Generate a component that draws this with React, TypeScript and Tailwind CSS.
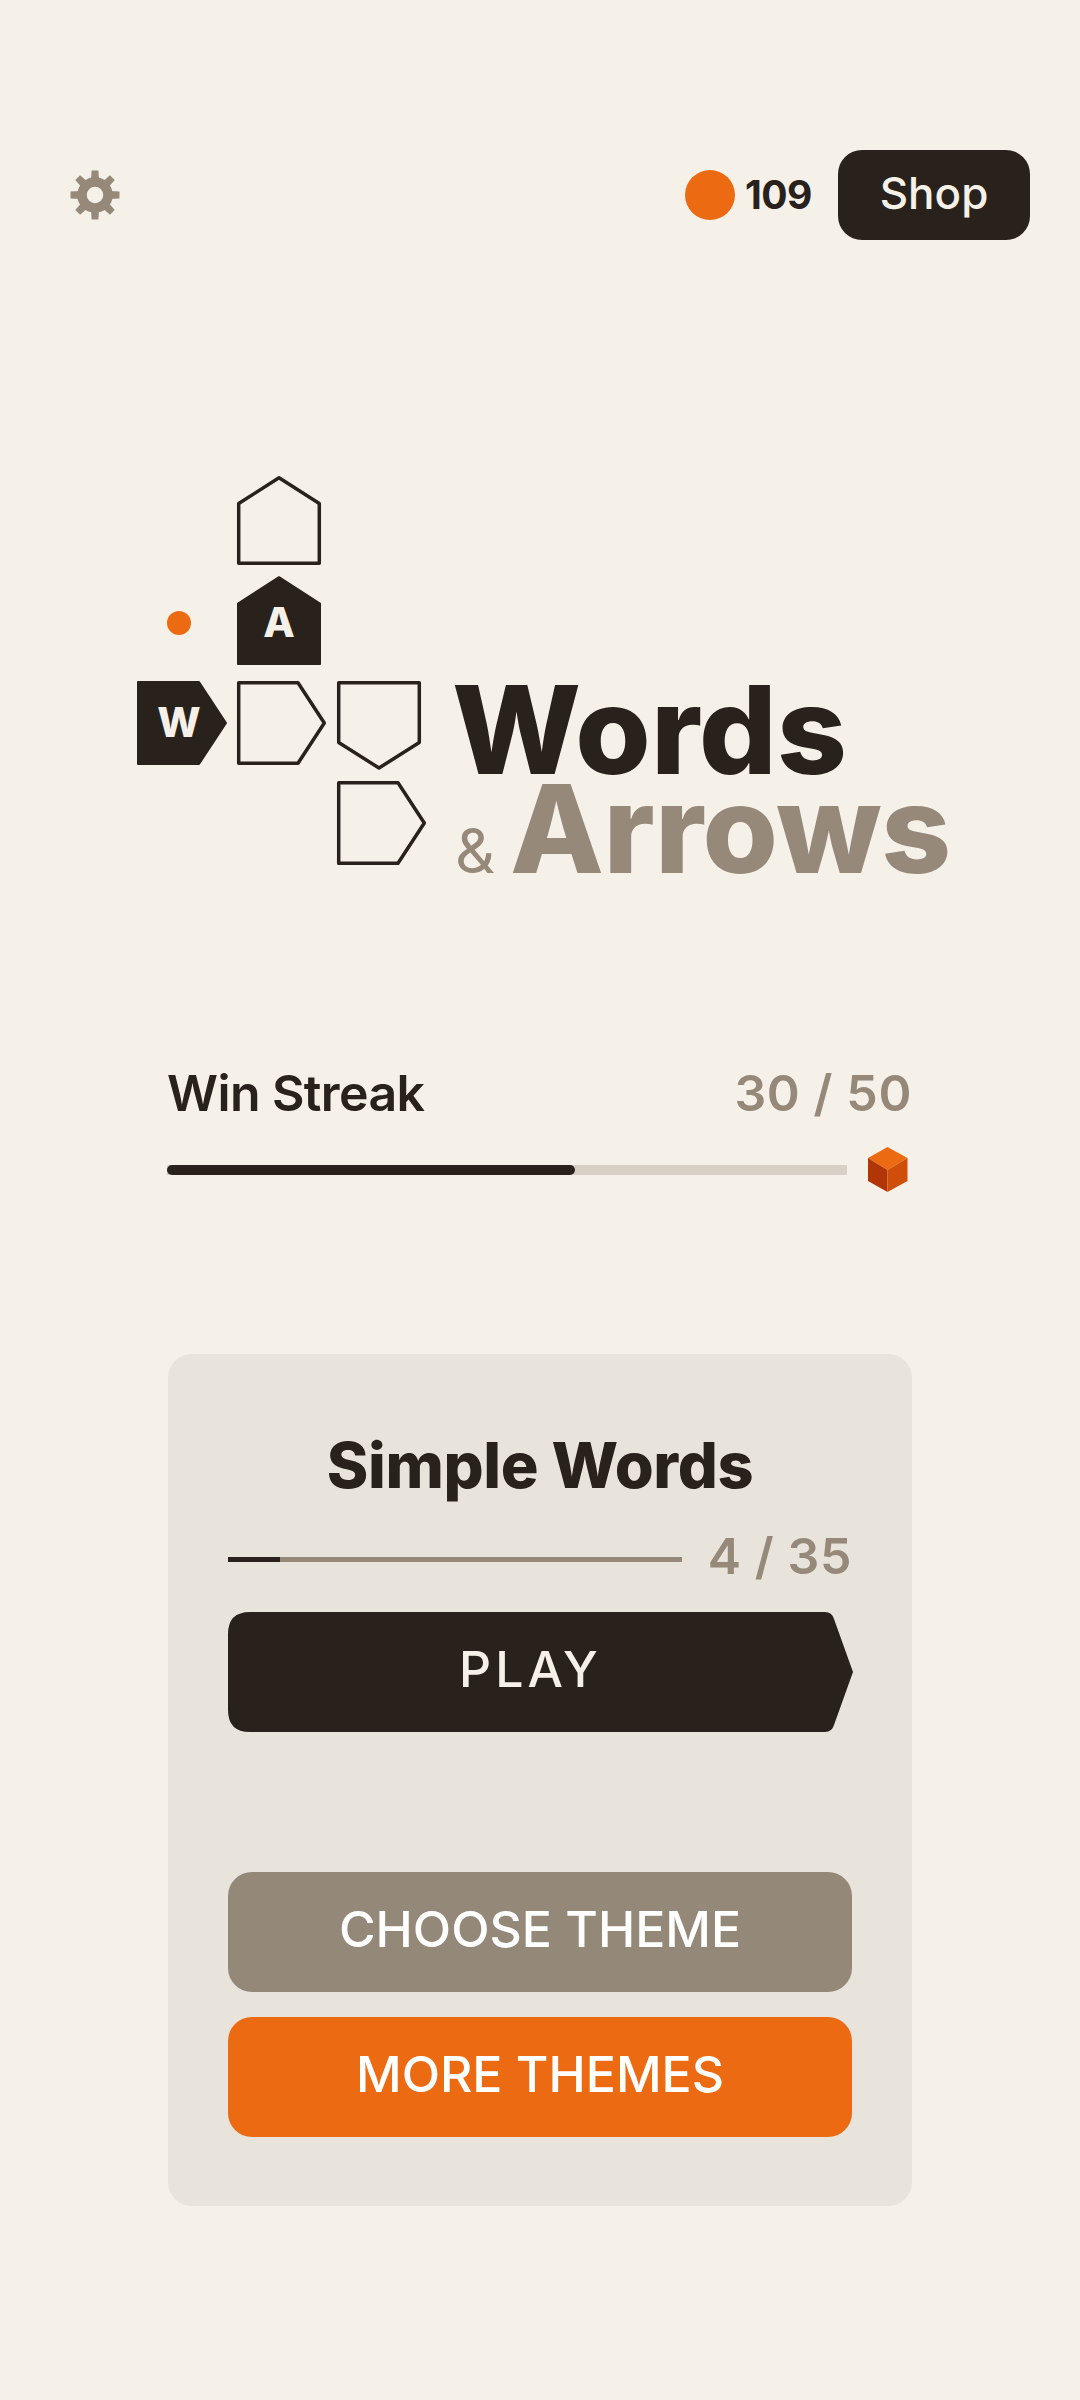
const DARK = "#29221c";

function Gear() {
  const teeth = [0, 45, 90, 135, 180, 225, 270, 315];
  return (
    <svg width="50" height="50" viewBox="0 0 50 50" fill="#96897a">
      <circle cx="25" cy="25" r="13" fill="none" stroke="#96897a" strokeWidth="9.5" />
      {teeth.map((a) => (
        <path key={a} d="M21 10 L21.6 0.5 L28.4 0.5 L29 10 Z" transform={`rotate(${a} 25 25)`} />
      ))}
    </svg>
  );
}

function Logo() {
  const outline = { fill: "none", stroke: DARK, strokeWidth: 3.5, strokeLinejoin: "round" as const };
  const solid = { fill: DARK, stroke: DARK, strokeWidth: 2, strokeLinejoin: "round" as const };
  const letter = { fill: "#f5f1e9", fontSize: 41, fontWeight: 800, textAnchor: "middle" as const, fontFamily: "Inter, sans-serif" };
  return (
    <svg width="289" height="389" viewBox="137 476 289 389" className="shrink-0">
      <path d="M238.7 503.5 L279 477.8 L319.3 503.5 V563.3 H238.7 Z" {...outline} />
      <path d="M238 603.5 L279 577.2 L320 603.5 V664 H238 Z" {...solid} />
      <text x="279" y="637" {...letter}>A</text>
      <circle cx="179" cy="623" r="12" fill="#ec6b12" />
      <path d="M138 682 H199 L226 723 L199 764 H138 Z" {...solid} />
      <text x="179" y="737" {...letter}>W</text>
      <path d="M238.7 682.7 H298 L324.3 723 L298 763.3 H238.7 Z" {...outline} />
      <path d="M338.7 682.7 H419.3 V742.5 L379 768 L338.7 742.5 Z" {...outline} />
      <path d="M338.7 782.7 H398 L424.3 823 L398 863.3 H338.7 Z" {...outline} />
    </svg>
  );
}

function Cube() {
  return (
    <svg width="40" height="45" viewBox="868 1147 40 45" className="shrink-0">
      <path d="M887.5 1147 L907.5 1158 L887.5 1170 L868 1158 Z" fill="#ec6b12" />
      <path d="M868 1158 L887.5 1170 V1192 L868 1181 Z" fill="#b23508" />
      <path d="M907.5 1158 L887.5 1170 V1192 L907.5 1181 Z" fill="#cf4f0a" />
    </svg>
  );
}

export default function App() {
  return (
    <div className="min-h-[2400px] bg-[#f5f1e9] font-['Inter',sans-serif] text-[#29221c]">
      {/* Top bar */}
      <div className="flex items-center justify-between pt-[150px] pl-[70px] pr-[50px]">
        <Gear />
        <div className="flex items-center">
          <div className="h-[50px] w-[50px] rounded-full bg-[#ec6b12]" />
          <span className="ml-[10px] w-[93px] text-[39px] font-bold tracking-[-0.5px]">109</span>
          <button className="flex h-[90px] w-[192px] items-center justify-center rounded-[24px] bg-[#29221c] pb-[4px] text-[44px] font-medium text-[#f5f1e9]">
            Shop
          </button>
        </div>
      </div>

      {/* Logo */}
      <div className="mt-[236px] flex pl-[137px]">
        <Logo />
        <div className="ml-[26px] pt-[204px]">
          <div className="text-[122px] font-extrabold leading-[99px] tracking-[0.2px]">Words</div>
          <div className="flex items-baseline text-[#96897a]">
            <span className="ml-[3px] text-[62px] font-normal leading-[99px]">&amp;</span>
            <span className="ml-[15px] text-[122px] font-extrabold leading-[99px] tracking-[-0.3px]">Arrows</span>
          </div>
        </div>
      </div>

      {/* Win streak */}
      <div className="ml-[167px] mt-[163px] w-[745px]">
        <div className="flex items-center justify-between text-[50px] font-semibold leading-[60px]">
          <span className="tracking-[-0.6px]">Win Streak</span>
          <span className="tracking-[0.6px] text-[#96897a]">30 / 50</span>
        </div>
        <div className="mt-[24px] flex items-center">
          <div className="h-[10px] w-[680px] bg-[#d7d0c5]">
            <div className="h-full w-[408px] rounded-full bg-[#29221c]" />
          </div>
          <div className="ml-[21px]">
            <Cube />
          </div>
        </div>
      </div>

      {/* Card */}
      <div className="ml-[168px] mt-[162px] w-[744px] rounded-[24px] bg-[#e8e4dc] px-[60px] pt-[75px] pb-[69px]">
        <div className="text-center text-[63px] font-extrabold leading-[72px] tracking-[-0.4px]">Simple Words</div>
        <div className="mt-[25px] flex items-center justify-between">
          <div className="mt-[7px] h-[5px] w-[454px] bg-[#96897a]">
            <div className="h-full w-[52px] bg-[#29221c]" />
          </div>
          <span className="text-[50px] font-semibold leading-[60px] tracking-[0.6px] text-[#96897a]">4 / 35</span>
        </div>
        <button className="mt-[26px] block h-[120px] w-[625px] bg-[#29221c] pr-[20px] pb-[5px] text-center text-[50px] font-medium tracking-[4px] text-[#f5f1e9] [clip-path:path('M22,0L597,0Q604,0,606,7L625,60L606,113Q604,120,597,120L22,120Q0,120,0,98L0,22Q0,0,22,0Z')]">
          PLAY
        </button>
        <button className="mt-[140px] block h-[120px] w-full rounded-[24px] bg-[#948879] pb-[6px] text-center text-[50px] font-medium text-white">
          CHOOSE THEME
        </button>
        <button className="mt-[25px] block h-[120px] w-full rounded-[24px] bg-[#ec6b12] pb-[6px] text-center text-[50px] font-medium text-white">
          MORE THEMES
        </button>
      </div>
    </div>
  );
}
